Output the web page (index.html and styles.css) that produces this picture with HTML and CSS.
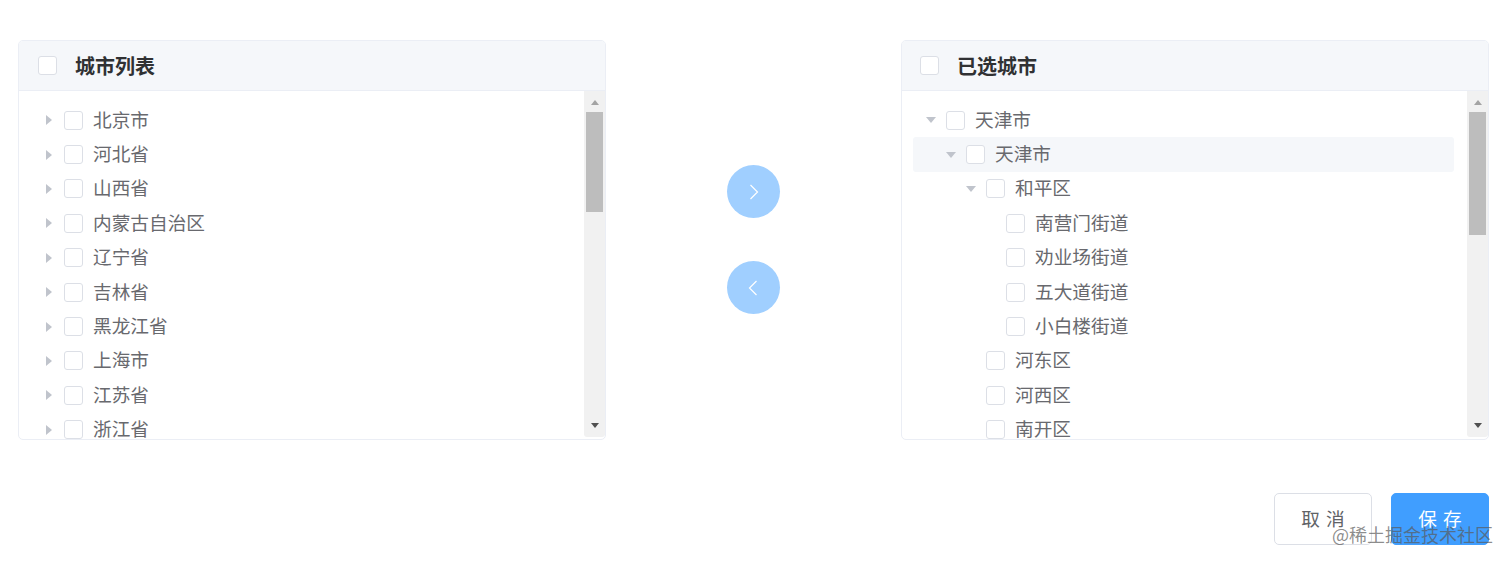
FILE: index.html
```html
<!DOCTYPE html>
<html>
<head>
    <title>城市选择</title>
    <link rel="stylesheet" href="styles.css">
</head>
<body>
    <div class="transfer">
        <div class="panel">
            <div class="panel-header">
                <span class="checkbox"></span>
                <span class="panel-title">城市列表</span>
            </div>
            <div class="panel-body">
                <div class="tree tree-left">
                    <div class="node"><span class="arrow"></span><span class="checkbox"></span><span class="label">北京市</span></div>
                    <div class="node"><span class="arrow"></span><span class="checkbox"></span><span class="label">河北省</span></div>
                    <div class="node"><span class="arrow"></span><span class="checkbox"></span><span class="label">山西省</span></div>
                    <div class="node"><span class="arrow"></span><span class="checkbox"></span><span class="label">内蒙古自治区</span></div>
                    <div class="node"><span class="arrow"></span><span class="checkbox"></span><span class="label">辽宁省</span></div>
                    <div class="node"><span class="arrow"></span><span class="checkbox"></span><span class="label">吉林省</span></div>
                    <div class="node"><span class="arrow"></span><span class="checkbox"></span><span class="label">黑龙江省</span></div>
                    <div class="node"><span class="arrow"></span><span class="checkbox"></span><span class="label">上海市</span></div>
                    <div class="node"><span class="arrow"></span><span class="checkbox"></span><span class="label">江苏省</span></div>
                    <div class="node"><span class="arrow"></span><span class="checkbox"></span><span class="label">浙江省</span></div>
                </div>
                <div class="scrollbar">
                    <span class="scroll-up"></span>
                    <span class="thumb"></span>
                    <span class="scroll-down"></span>
                </div>
            </div>
        </div>

        <div class="actions">
            <button class="round-btn">
                <svg width="12" height="16" viewBox="0 0 12 16"><path d="M2.5 1l7 7-7 7" fill="none" stroke="#fff" stroke-width="1.2"/></svg>
            </button>
            <button class="round-btn">
                <svg width="12" height="16" viewBox="0 0 12 16"><path d="M8.5 1l-7 7 7 7" fill="none" stroke="#fff" stroke-width="1.2"/></svg>
            </button>
        </div>

        <div class="panel">
            <div class="panel-header panel-header-right">
                <span class="checkbox"></span>
                <span class="panel-title">已选城市</span>
            </div>
            <div class="panel-body">
                <div class="tree">
                    <div class="node"><span class="arrow open"></span><span class="checkbox"></span><span class="label">天津市</span></div>
                    <div class="node level-1 current"><span class="arrow open"></span><span class="checkbox"></span><span class="label">天津市</span></div>
                    <div class="node level-2"><span class="arrow open"></span><span class="checkbox"></span><span class="label">和平区</span></div>
                    <div class="node level-3"><span class="arrow none"></span><span class="checkbox"></span><span class="label">南营门街道</span></div>
                    <div class="node level-3"><span class="arrow none"></span><span class="checkbox"></span><span class="label">劝业场街道</span></div>
                    <div class="node level-3"><span class="arrow none"></span><span class="checkbox"></span><span class="label">五大道街道</span></div>
                    <div class="node level-3"><span class="arrow none"></span><span class="checkbox"></span><span class="label">小白楼街道</span></div>
                    <div class="node level-2"><span class="arrow none"></span><span class="checkbox"></span><span class="label">河东区</span></div>
                    <div class="node level-2"><span class="arrow none"></span><span class="checkbox"></span><span class="label">河西区</span></div>
                    <div class="node level-2"><span class="arrow none"></span><span class="checkbox"></span><span class="label">南开区</span></div>
                </div>
                <div class="scrollbar">
                    <span class="scroll-up"></span>
                    <span class="thumb thumb-long"></span>
                    <span class="scroll-down"></span>
                </div>
            </div>
        </div>
    </div>

    <div class="footer">
        <button class="btn">取消</button>
        <button class="btn btn-primary">保存</button>
    </div>

    <div class="watermark">@稀土掘金技术社区</div>
</body>
</html>
```

FILE: styles.css
```css
body {
    margin: 0;
    padding: 40px 20px 0 18px;
    background: #fff;
    color: #606266;
    font-family: "Noto Sans CJK SC", "Noto Sans", sans-serif;
    font-size: 18.67px;
}

.transfer {
    display: flex;
    justify-content: space-between;
    align-items: center;
}

.panel {
    width: 588px;
    height: 400px;
    box-sizing: border-box;
    border: 1px solid #ebeef5;
    border-radius: 5px;
    overflow: hidden;
    display: flex;
    flex-direction: column;
}

.panel-header {
    height: 50px;
    flex: none;
    box-sizing: border-box;
    display: flex;
    align-items: center;
    padding-left: 19px;
    background: #f5f7fa;
    border-bottom: 1px solid #ebeef5;
}

.panel-header-right {
    padding-left: 18px;
}

.panel-title {
    margin-left: 18px;
    color: #303133;
    font-size: 20px;
    font-weight: 700;
}

.panel-body {
    flex: 1;
    min-height: 0;
    display: flex;
}

.tree {
    flex: 1;
    overflow: hidden;
    padding: 12px 13px 0 11px;
}

.tree-left {
    padding-left: 12px;
}

.node {
    height: 34.4px;
    display: flex;
    align-items: center;
    border-radius: 3px;
    white-space: nowrap;
}

.node.current {
    background: #f5f7fa;
}

.level-1 {
    padding-left: 20px;
}

.level-2 {
    padding-left: 40px;
}

.level-3 {
    padding-left: 60px;
}

.label {
    margin-bottom: 4px;
    color: #68696e;
}

.arrow {
    width: 33px;
    flex: none;
    display: flex;
    justify-content: center;
    padding-left: 3px;
    box-sizing: border-box;
}

.arrow::before {
    content: "";
    border-style: solid;
    border-width: 5px 0 5px 6px;
    border-color: transparent transparent transparent #c0c4cc;
}

.arrow.open::before {
    border-width: 6px 5px 0 5px;
    border-color: #c0c4cc transparent transparent transparent;
}

.arrow.none::before {
    border: none;
}

.checkbox {
    width: 19px;
    height: 19px;
    flex: none;
    box-sizing: border-box;
    border: 1px solid #dcdfe6;
    border-radius: 3px;
    background: #fff;
    margin-right: 10px;
}

.panel-header .checkbox {
    margin-right: 0;
}

.scrollbar {
    width: 21px;
    flex: none;
    display: flex;
    flex-direction: column;
    align-items: center;
    margin-bottom: 2px;
    background: #f1f1f1;
    border-radius: 0 0 3px 3px;
}

.scroll-up {
    margin-top: 9px;
    border-style: solid;
    border-width: 0 4.5px 5px 4.5px;
    border-color: transparent transparent #a3a3a3 transparent;
}

.thumb {
    width: 17px;
    height: 100px;
    margin-top: 7px;
    background: #bdbdbd;
}

.thumb-long {
    height: 123px;
}

.scroll-down {
    margin-top: auto;
    margin-bottom: 9px;
    border-style: solid;
    border-width: 5px 4.5px 0 4.5px;
    border-color: #505050 transparent transparent transparent;
}

.actions {
    display: flex;
    flex-direction: column;
    gap: 43px;
    margin-top: -1px;
}

.round-btn {
    width: 53px;
    height: 53px;
    padding: 0;
    border: none;
    border-radius: 50%;
    background: #a0cfff;
    display: flex;
    align-items: center;
    justify-content: center;
}

.footer {
    display: flex;
    justify-content: flex-end;
    gap: 19px;
    margin-top: 53px;
}

.btn {
    width: 98px;
    height: 52px;
    padding: 0 0 4px 6px;
    box-sizing: border-box;
    border: 1px solid #dcdfe6;
    border-radius: 5px;
    background: #fff;
    color: #606266;
    font-family: inherit;
    font-size: 18.67px;
    letter-spacing: 6px;
}

.btn-primary {
    background: #409eff;
    border-color: #409eff;
    color: #fff;
}

.watermark {
    position: absolute;
    top: 521px;
    left: 1332px;
    font-size: 18px;
    line-height: 26px;
    white-space: nowrap;
    color: rgba(90, 90, 90, 0.7);
}
```
